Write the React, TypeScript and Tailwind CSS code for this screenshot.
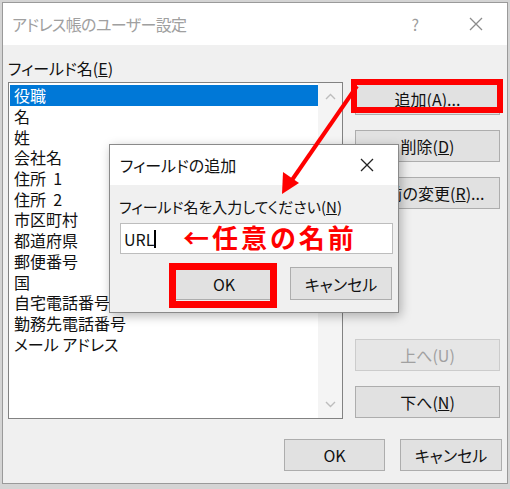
import React from 'react';

const items = [
  '役職', '名', '姓', '会社名', '住所  1', '住所  2', '市区町村', '都道府県',
  '郵便番号', '国', '自宅電話番号', '勤務先電話番号', 'メール アドレス',
];

function Btn({ children, disabled, className = '' }: { children: React.ReactNode; disabled?: boolean; className?: string }) {
  return (
    <div
      className={`flex items-center justify-center h-[32px] bg-[#e1e1e1] border border-[#adadad] text-[16px] ${disabled ? 'text-[#a0a0a0] border-[#cccccc] bg-[#e6e6e6]' : 'text-[#111]'} ${className}`}
    >
      {children}
    </div>
  );
}

export default function App() {
  return (
    <div className="relative w-[510px] h-[489px] bg-[#d4d4d4] pt-[2px] px-[2px] pb-[5px] [font-family:'Noto_Sans_CJK_JP',sans-serif] [font-feature-settings:'palt'] overflow-hidden">
      <div className="w-full h-full flex flex-col border border-[#9a9a9a] bg-[#f0f0f0]">
        {/* Title bar */}
        <div className="h-[42px] bg-white flex items-center pl-[9px] shrink-0">
          <span className="text-[16px] tracking-[-0.6px] text-[#a0a0a0] leading-none">アドレス帳のユーザー設定</span>
          <span className="ml-auto text-[16px] text-[#9c9c9c] mr-[50px]">?</span>
          <svg width="14" height="14" viewBox="0 0 14 14" className="mr-[24px]">
            <path d="M1 1L13 13M13 1L1 13" stroke="#8c8c8c" strokeWidth="1.3" />
          </svg>
        </div>

        {/* Body */}
        <div className="flex flex-col pl-[5px]">
          <div className="mt-[13px] h-[20px] leading-[20px] text-[16px] text-[#111]">
            フィールド名(<span className="underline">E</span>)
          </div>
          <div className="mt-[4px] flex">
            {/* List */}
            <div className="w-[335px] h-[337px] bg-white border border-[#828282] flex">
              <div className="flex-1 pt-[2px] pl-[1px]">
                {items.map((t, i) => (
                  <div
                    key={t}
                    className={`h-[20.7px] flex items-center pl-[4px] ${i === 0 ? 'bg-[#0078d7] text-white' : 'text-[#111]'}`}
                  >
                    <span className="text-[16px] leading-none whitespace-pre">{t}</span>
                  </div>
                ))}
              </div>
              <div className="w-[24px] bg-[#f4f4f4] flex flex-col items-center justify-between py-[10px]">
                <svg width="11" height="7" viewBox="0 0 11 7">
                  <path d="M1 6L5.5 1.5L10 6" stroke="#bdbdbd" strokeWidth="1.4" fill="none" />
                </svg>
                <svg width="11" height="7" viewBox="0 0 11 7">
                  <path d="M1 1L5.5 5.5L10 1" stroke="#bdbdbd" strokeWidth="1.4" fill="none" />
                </svg>
              </div>
            </div>

            {/* Right buttons */}
            <div className="ml-[12px] w-[145px] flex flex-col pt-[1px]">
              <Btn>追加(<span className="underline">A</span>)...</Btn>
              <Btn className="mt-[15px]">削除(<span className="underline">D</span>)</Btn>
              <Btn className="mt-[15px]">名前の変更(<span className="underline">R</span>)...</Btn>
              <Btn disabled className="mt-[130px]">上へ(U)</Btn>
              <Btn className="mt-[15px]">下へ(<span className="underline">N</span>)</Btn>
            </div>
          </div>

          {/* Bottom buttons */}
          <div className="mt-[20px] flex justify-end gap-[15px] pr-[5px]">
            <Btn className="w-[101px]">OK</Btn>
            <Btn className="w-[102px]">キャンセル</Btn>
          </div>
        </div>
      </div>

      {/* Red highlight around 追加 */}
      <div className="absolute left-[351px] top-[79px] w-[152px] h-[34px] border-[6px] border-[#ff0000]" />

      {/* Inner dialog */}
      <div className="absolute left-[109px] top-[144px] w-[290px] h-[169px] bg-[#f0f0f0] border border-[#8a8a8a] shadow-[2px_3px_10px_rgba(0,0,0,0.28)] flex flex-col">
        <div className="h-[40px] bg-white flex items-center pl-[10px] shrink-0">
          <span className="text-[16px] text-[#111]">フィールドの追加</span>
          <svg width="14" height="14" viewBox="0 0 14 14" className="ml-auto mr-[24px]">
            <path d="M1 1L13 13M13 1L1 13" stroke="#222" strokeWidth="1.3" />
          </svg>
        </div>
        <div className="flex flex-col pl-[9px] pr-[6px]">
          <div className="mt-[12px] h-[20px] leading-[20px] text-[15px] text-[#111]">
            フィールド名を入力してください(<span className="underline">N</span>)
          </div>
          <div className="mt-[6px] ml-[1px] h-[31px] w-[273px] bg-white border border-[#bdbdbd] flex items-center pl-[3px]">
            <span className="text-[16px] text-[#111]">URL</span>
            <span className="w-[2px] h-[18px] bg-black" />
          </div>
          <div className="mt-[13px] flex gap-[15px] pl-[54px]">
            <Btn className="w-[102px] h-[33px]">OK</Btn>
            <Btn className="w-[102px] h-[33px]">キャンセル</Btn>
          </div>
        </div>
        {/* Red annotation text */}
        <div className="absolute left-[73px] top-[77px] text-[26px] leading-[30px] font-bold text-[#ff0000] tracking-[3px]">
          ←任意の名前
        </div>
        {/* Red highlight around OK */}
        <div className="absolute left-[59px] top-[118px] w-[108px] h-[45px] border-[7px] border-[#ff0000]" />
      </div>

      {/* Red arrow */}
      <svg className="absolute left-0 top-0 pointer-events-none" width="510" height="489">
        <line x1="357" y1="86" x2="292" y2="180" stroke="#ff0000" strokeWidth="4" />
        <path d="M282 194L283 172L299 183Z" fill="#ff0000" />
      </svg>
    </div>
  );
}
